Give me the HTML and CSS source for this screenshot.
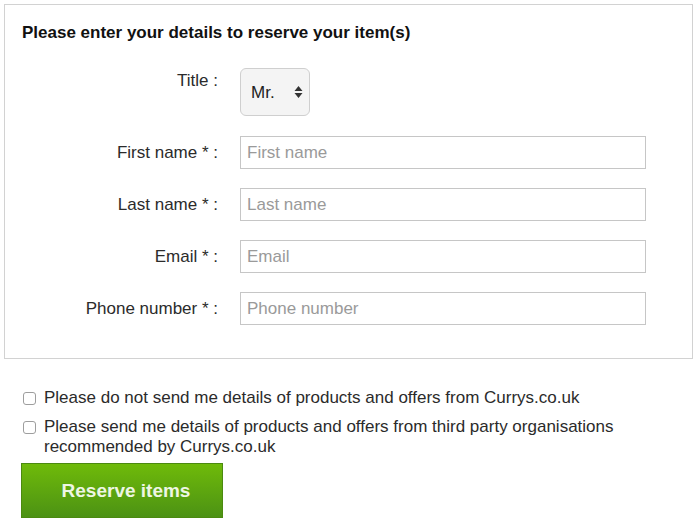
FILE: index.html
```html
<!DOCTYPE html>
<html lang="en">
<head>
  <meta charset="UTF-8">
  <meta name="viewport" content="width=device-width, initial-scale=1">
  <title>Reserve items</title>
  <link rel="stylesheet" href="styles.css">
</head>
<body>

  <form class="reserve">
    <div class="details">
      <h2>Please enter your details to reserve your item(s)</h2>

      <div class="fields">
        <label class="lbl lbl-title" for="title">Title :</label>
        <div class="select-wrap">
          <select id="title">
            <option>Mr.</option>
            <option>Mrs.</option>
            <option>Miss</option>
            <option>Ms.</option>
          </select>
          <svg class="arrows" width="9" height="14" viewBox="0 0 9 14">
            <path d="M4.5 1 L8.5 6 L0.5 6 Z M4.5 13 L8.5 8 L0.5 8 Z" fill="#333"/>
          </svg>
        </div>

        <label class="lbl" for="first">First name * :</label>
        <input id="first" type="text" placeholder="First name">

        <label class="lbl" for="last">Last name * :</label>
        <input id="last" type="text" placeholder="Last name">

        <label class="lbl" for="email">Email * :</label>
        <input id="email" type="text" placeholder="Email">

        <label class="lbl" for="phone">Phone number * :</label>
        <input id="phone" type="text" placeholder="Phone number">
      </div>
    </div>

    <div class="opts">
      <label class="opt">
        <input type="checkbox">
        <span>Please do not send me details of products and offers from Currys.co.uk</span>
      </label>
      <label class="opt">
        <input type="checkbox">
        <span>Please send me details of products and offers from third party organisations recommended by Currys.co.uk</span>
      </label>
    </div>

    <button type="button" class="btn-reserve">Reserve items</button>
  </form>

</body>
</html>
```

FILE: styles.css
```css
* { margin:0; padding:0; box-sizing:border-box; }
body {
  font-family:'Liberation Sans', Arial, sans-serif;
  font-size:17px; color:#2b2b2b; background:#fff;
  padding:4px 7px 0 4px;
}
.details {
  border:1px solid #d2d2d2;
  padding:18px 0 33px 17px;
  height:355px;
}
.details h2 {
  font-size:17px; line-height:20px; font-weight:bold; color:#111;
  margin-bottom:25px;
}
.fields {
  display:grid;
  grid-template-columns:196px 406px;
  column-gap:22px;
  row-gap:19px;
}
.lbl {
  text-align:right; line-height:20px; padding-top:7px;
}
.lbl-title { padding-top:3px; }
.select-wrap {
  position:relative; width:70px; height:48px; margin-bottom:1px;
}
.select-wrap select {
  appearance:none; -webkit-appearance:none;
  width:100%; height:100%;
  border:1px solid #cfcfcf; border-radius:6px;
  background:#f4f4f4; color:#222;
  font-family:inherit; font-size:17px;
  padding:0 0 0 10px;
}
.arrows { position:absolute; right:7px; top:17px; pointer-events:none; }
.fields input {
  height:33px; border:1px solid #c6c6c6;
  font-family:inherit; font-size:17px; color:#333;
  padding:0 6px; background:#fff;
}
.fields input::placeholder { color:#9a9a9a; }
.opts { padding:29px 0 0 19px; }
.opt {
  display:flex; align-items:flex-start; gap:8px;
  line-height:20px; margin-bottom:9px;
  padding-right:60px;
}
.opt:last-child { margin-bottom:6px; }
.opt input {
  appearance:none; -webkit-appearance:none;
  flex:none; width:13px; height:13px; margin-top:4px;
  border:1px solid #9e9e9e; border-radius:3px; background:#fff;
}
.btn-reserve {
  margin-left:17px;
  width:202px; height:55px;
  padding-left:8px;
  border:1px solid #4b8a10;
  background:linear-gradient(#6fba0a, #4c9214);
  color:#eef6e4; font-family:inherit; font-size:19px; font-weight:bold;
  cursor:pointer;
}
```
